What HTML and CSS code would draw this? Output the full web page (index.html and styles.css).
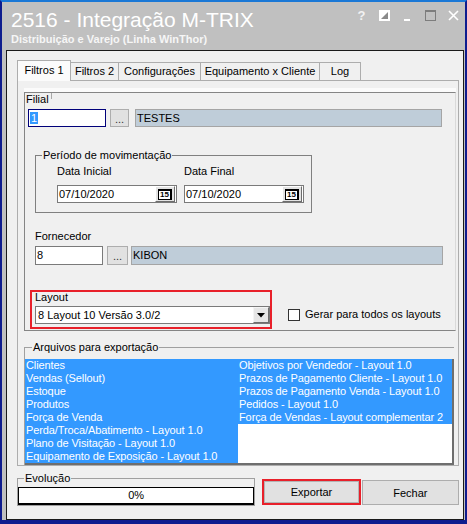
FILE: index.html
```html
<!DOCTYPE html>
<html lang="pt-BR">
<head>
  <meta charset="UTF-8">
  <title>2516 - Integração M-TRIX</title>
  <link rel="stylesheet" href="styles.css">
</head>
<body>
  <div class="window">
    <header class="titlebar">
      <div class="caption">
        <h1>2516 - Integração M-TRIX</h1>
        <div class="subtitle">Distribuição e Varejo (Linha WinThor)</div>
      </div>
      <div class="controls">
        <span class="ctl help">?</span>
        <svg class="ctl" width="11" height="11" viewBox="0 0 11 11"><rect x="0.5" y="0.5" width="10" height="10" fill="#fff" stroke="#fff"/><polygon points="2,9 9,2 9,9" fill="#8a8a8a"/></svg>
        <svg class="ctl" width="11" height="11" viewBox="0 0 11 11"><rect x="2" y="9" width="6" height="2" fill="#fff"/></svg>
        <svg class="ctl" width="11" height="11" viewBox="0 0 11 11"><rect x="0.5" y="1" width="10" height="9.5" fill="none" stroke="#7d7d7d"/><rect x="0" y="0" width="11" height="2" fill="#7d7d7d"/></svg>
        <svg class="ctl" width="11" height="11" viewBox="0 0 11 11"><path d="M1 1 L10 10 M10 1 L1 10" stroke="#fff" stroke-width="1.6"/></svg>
      </div>
    </header>

    <main class="panel">
      <div class="tabs">
        <div class="tab active">Filtros 1</div>
        <div class="tab w-filtros2">Filtros 2</div>
        <div class="tab w-config">Configurações</div>
        <div class="tab w-equip">Equipamento x Cliente</div>
        <div class="tab w-log">Log</div>
      </div>

      <div class="sheet">
        <div class="group filtros">
          <div class="group-caption">Filial</div>
          <div class="row filial">
            <div class="edit focus w-filial"><span class="sel">1</span></div>
            <div class="dots">...</div>
            <div class="edit readonly w-testes">TESTES</div>
          </div>

          <fieldset class="periodo">
            <legend>Período de movimentação</legend>
            <div class="dates">
              <div class="date-col">
                <div class="label">Data Inicial</div>
                <div class="edit date"><span class="val">07/10/2020</span><span class="cal-btn"><span class="cal">15</span></span></div>
              </div>
              <div class="date-col">
                <div class="label">Data Final</div>
                <div class="edit date"><span class="val">07/10/2020</span><span class="cal-btn"><span class="cal">15</span></span></div>
              </div>
            </div>
          </fieldset>

          <div class="fornecedor">
            <div class="label">Fornecedor</div>
            <div class="row">
              <div class="edit w-forn">8</div>
              <div class="dots wide">...</div>
              <div class="edit readonly w-kibon">KIBON</div>
            </div>
          </div>

          <div class="layout-row">
            <div class="layout-box">
              <div class="label layout-label">Layout</div>
              <div class="combo">
                <span class="combo-text">8 Layout 10 Versão 3.0/2</span>
                <span class="combo-btn"><svg width="8" height="5" viewBox="0 0 8 5"><polygon points="0,0 8,0 4,4.5" fill="#000"/></svg></span>
              </div>
            </div>
            <div class="check"><span class="box"></span>Gerar para todos os layouts</div>
          </div>
        </div>

        <fieldset class="arquivos">
          <legend>Arquivos para exportação</legend>
          <div class="list">
            <ul class="col first">
              <li>Clientes</li>
              <li>Vendas (Sellout)</li>
              <li>Estoque</li>
              <li>Produtos</li>
              <li>Força de Venda</li>
              <li>Perda/Troca/Abatimento - Layout 1.0</li>
              <li>Plano de Visitação - Layout 1.0</li>
              <li>Equipamento de Exposição - Layout 1.0</li>
            </ul>
            <ul class="col">
              <li>Objetivos por Vendedor - Layout 1.0</li>
              <li>Prazos de Pagamento Cliente - Layout 1.0</li>
              <li>Prazos de Pagamento Venda - Layout 1.0</li>
              <li>Pedidos - Layout 1.0</li>
              <li>Força de Vendas - Layout complementar 2</li>
            </ul>
          </div>
        </fieldset>
      </div>

      <div class="footer">
        <fieldset class="evolucao">
          <legend>Evolução</legend>
          <div class="progress">0%</div>
        </fieldset>
        <button class="btn export">Exportar</button>
        <button class="btn close">Fechar</button>
      </div>
    </main>
  </div>
</body>
</html>
```

FILE: styles.css
```css
* { box-sizing: border-box; }
body { margin: 0; font: 11px 'Liberation Sans', Arial, sans-serif; color: #000; }

/* moldura da janela */
.window { width: 467px; height: 524px; background: #c0c0c0; border: 2px solid #0e1c8e; border-top-color: #1a78d6; border-bottom-width: 4px; }
.titlebar { height: 48px; padding: 6px 6px 0 9px; display: flex; justify-content: space-between; }
.titlebar h1 { margin: 0; font-size: 21px; font-weight: normal; line-height: 24px; color: #fff; }
.subtitle { font-weight: bold; font-size: 11px; line-height: 13px; color: #f6f6f6; margin-top: 1px; }
.controls { display: flex; gap: 12px; margin-top: 2px; height: 12px; }
.ctl { width: 11px; height: 11px; display: block; }
.help { font-weight: bold; font-size: 13px; line-height: 11px; color: #f2f2f2; text-align: center; }

.panel { width: 458px; height: 470px; margin-left: 4px; background: #f0f0f0; border: 1px solid #1a1a1a; padding: 9px 4px 0 10px; }

/* abas */
.tabs { display: flex; align-items: flex-end; height: 20px; }
.tab { height: 18px; width: 48px; border: 1px solid #adadad; border-bottom: none; margin-left: -1px; background: #f0f0f0; text-align: center; line-height: 17px; }
.tab.active { width: 54px; height: 21px; margin-left: 0; margin-bottom: -1px; background: #fbfbfb; position: relative; z-index: 1; line-height: 18px; }
.w-filtros2 { width: 49px; }
.w-config { width: 83px; }
.w-equip { width: 120px; }
.w-log { width: 42px; }

.sheet { width: 442px; height: 386px; border: 1px solid #adadad; background: #f0f0f0; padding: 11px 2px 0 6px; }

.group.filtros { width: 432px; border: 1px solid #858585; border-right-color: #dadada; padding-bottom: 1px; box-shadow: 0 -4px 0 #fbfbfb; }
.group-caption { display: inline-block; line-height: 13px; padding: 0 2px 0 1px; border-right: 1px solid #a8a8a8; height: 6px; overflow: visible; }
.label { line-height: 13px; }

.row { display: flex; }
.row.filial { margin: 4px 0 0 3px; gap: 4px; }
.row.filial .readonly { margin-left: 2px; }

/* campos de edição */
.edit { height: 18px; border: 1px solid #7a7a7a; background: #fff; line-height: 16px; padding-left: 1px; white-space: nowrap; }
.edit.focus { border-color: #00007a; }
.edit.readonly { background: #bfcdd9; border-color: #a5a5a5; }
.sel { background: #3399ff; color: #fff; padding: 0 1px; }
.w-filial { width: 78px; }
.w-testes { width: 307px; }
.w-forn { width: 68px; height: 19px; }
.w-kibon { width: 312px; height: 19px; }
.dots { width: 19px; height: 18px; border: 1px solid #adadad; background: #e1e1e1; text-align: center; line-height: 18px; color: #333; }
.dots.wide { width: 21px; height: 19px; }

/* período */
fieldset { margin: 0; padding: 0; min-width: 0; }
legend { padding: 0 1px; line-height: 12px; }
.periodo { width: 277px; margin: 22px 0 0 10px; border: 1px solid #808080; }
.periodo legend { margin-left: 6px; }
.dates { display: flex; gap: 7px; padding: 4px 0 9px 21px; }
.date-col .label { margin-bottom: 7px; }
.edit.date { width: 120px; display: flex; align-items: center; padding-right: 1px; }
.edit.date .val { flex: 1; }
.cal-btn { width: 20px; height: 16px; background: #e3e3e3; border: 1px solid; border-color: #fff #6d6d6d #6d6d6d #fff; display: flex; align-items: center; justify-content: center; }
.cal { font: bold 8px/8px 'Liberation Sans', Arial, sans-serif; border: 1px solid #000; border-top-width: 2px; border-right-width: 2px; background: #fff; padding: 0 1px; }

.fornecedor { margin: 17px 0 0 10px; }
.fornecedor .row { margin-top: 3px; gap: 0; }
.fornecedor .dots { margin: 0 3px 0 4px; }

/* layout */
.layout-row { display: flex; align-items: flex-end; margin: 25px 0 0 5px; }
.layout-box { width: 242px; border: 2px solid #e8202a; padding: 0 0 3px 3px; }
.layout-label { line-height: 12px; margin-top: -1px; }
.combo { width: 235px; height: 18px; margin-top: 3px; border: 1px solid #7a7a7a; background: #fff; display: flex; }
.combo-text { flex: 1; line-height: 16px; padding-left: 2px; }
.combo-btn { width: 16px; height: 16px; background: #e6e6e6; border: 1px solid; border-color: #f4f4f4 #6d6d6d #6d6d6d #f4f4f4; display: flex; align-items: center; justify-content: center; }
.check { display: flex; align-items: center; gap: 5px; margin: 0 0 8px 16px; line-height: 13px; }
.check .box { width: 12px; height: 12px; border: 1px solid #333; background: #fff; }

/* lista de arquivos */
.arquivos { width: 430px; margin: 10px 0 0 0; border: 1px solid #a0a0a0; border-right: none; border-bottom: none; }
.arquivos legend { margin-left: 7px; }
.list { margin-top: 6px; display: flex; background: #fff; border-right: 2px solid #6e6e6e; border-bottom: 2px solid #6e6e6e; }
.col { margin: 0; padding: 0; list-style: none; flex: 1; }
.col.first { flex: 0 0 213px; }
.col li { height: 13px; line-height: 13px; background: #3399ff; color: #fff; padding-left: 1px; white-space: nowrap; letter-spacing: -0.1px; }

/* rodapé */
.footer { display: flex; align-items: flex-end; margin-top: 6px; }
.evolucao { width: 240px; border: 1px solid #a0a0a0; }
.evolucao legend { margin-left: 6px; }
.progress { height: 18px; margin-top: 3px; border: 1px solid #000; border-bottom-width: 2px; background: #fff; text-align: center; line-height: 15px; }
.btn { font: 11px 'Liberation Sans', Arial, sans-serif; color: #000; background: #e1e1e1; border: 1px solid #adadad; padding: 0; }
.btn.export { width: 99px; height: 26px; margin: 0 0 1px 7px; border: 2px solid #e8202a; box-shadow: inset 0 0 0 1px #b4b4b4; }
.btn.close { width: 98px; height: 25px; margin: 0 0 1px 1px; }
```
